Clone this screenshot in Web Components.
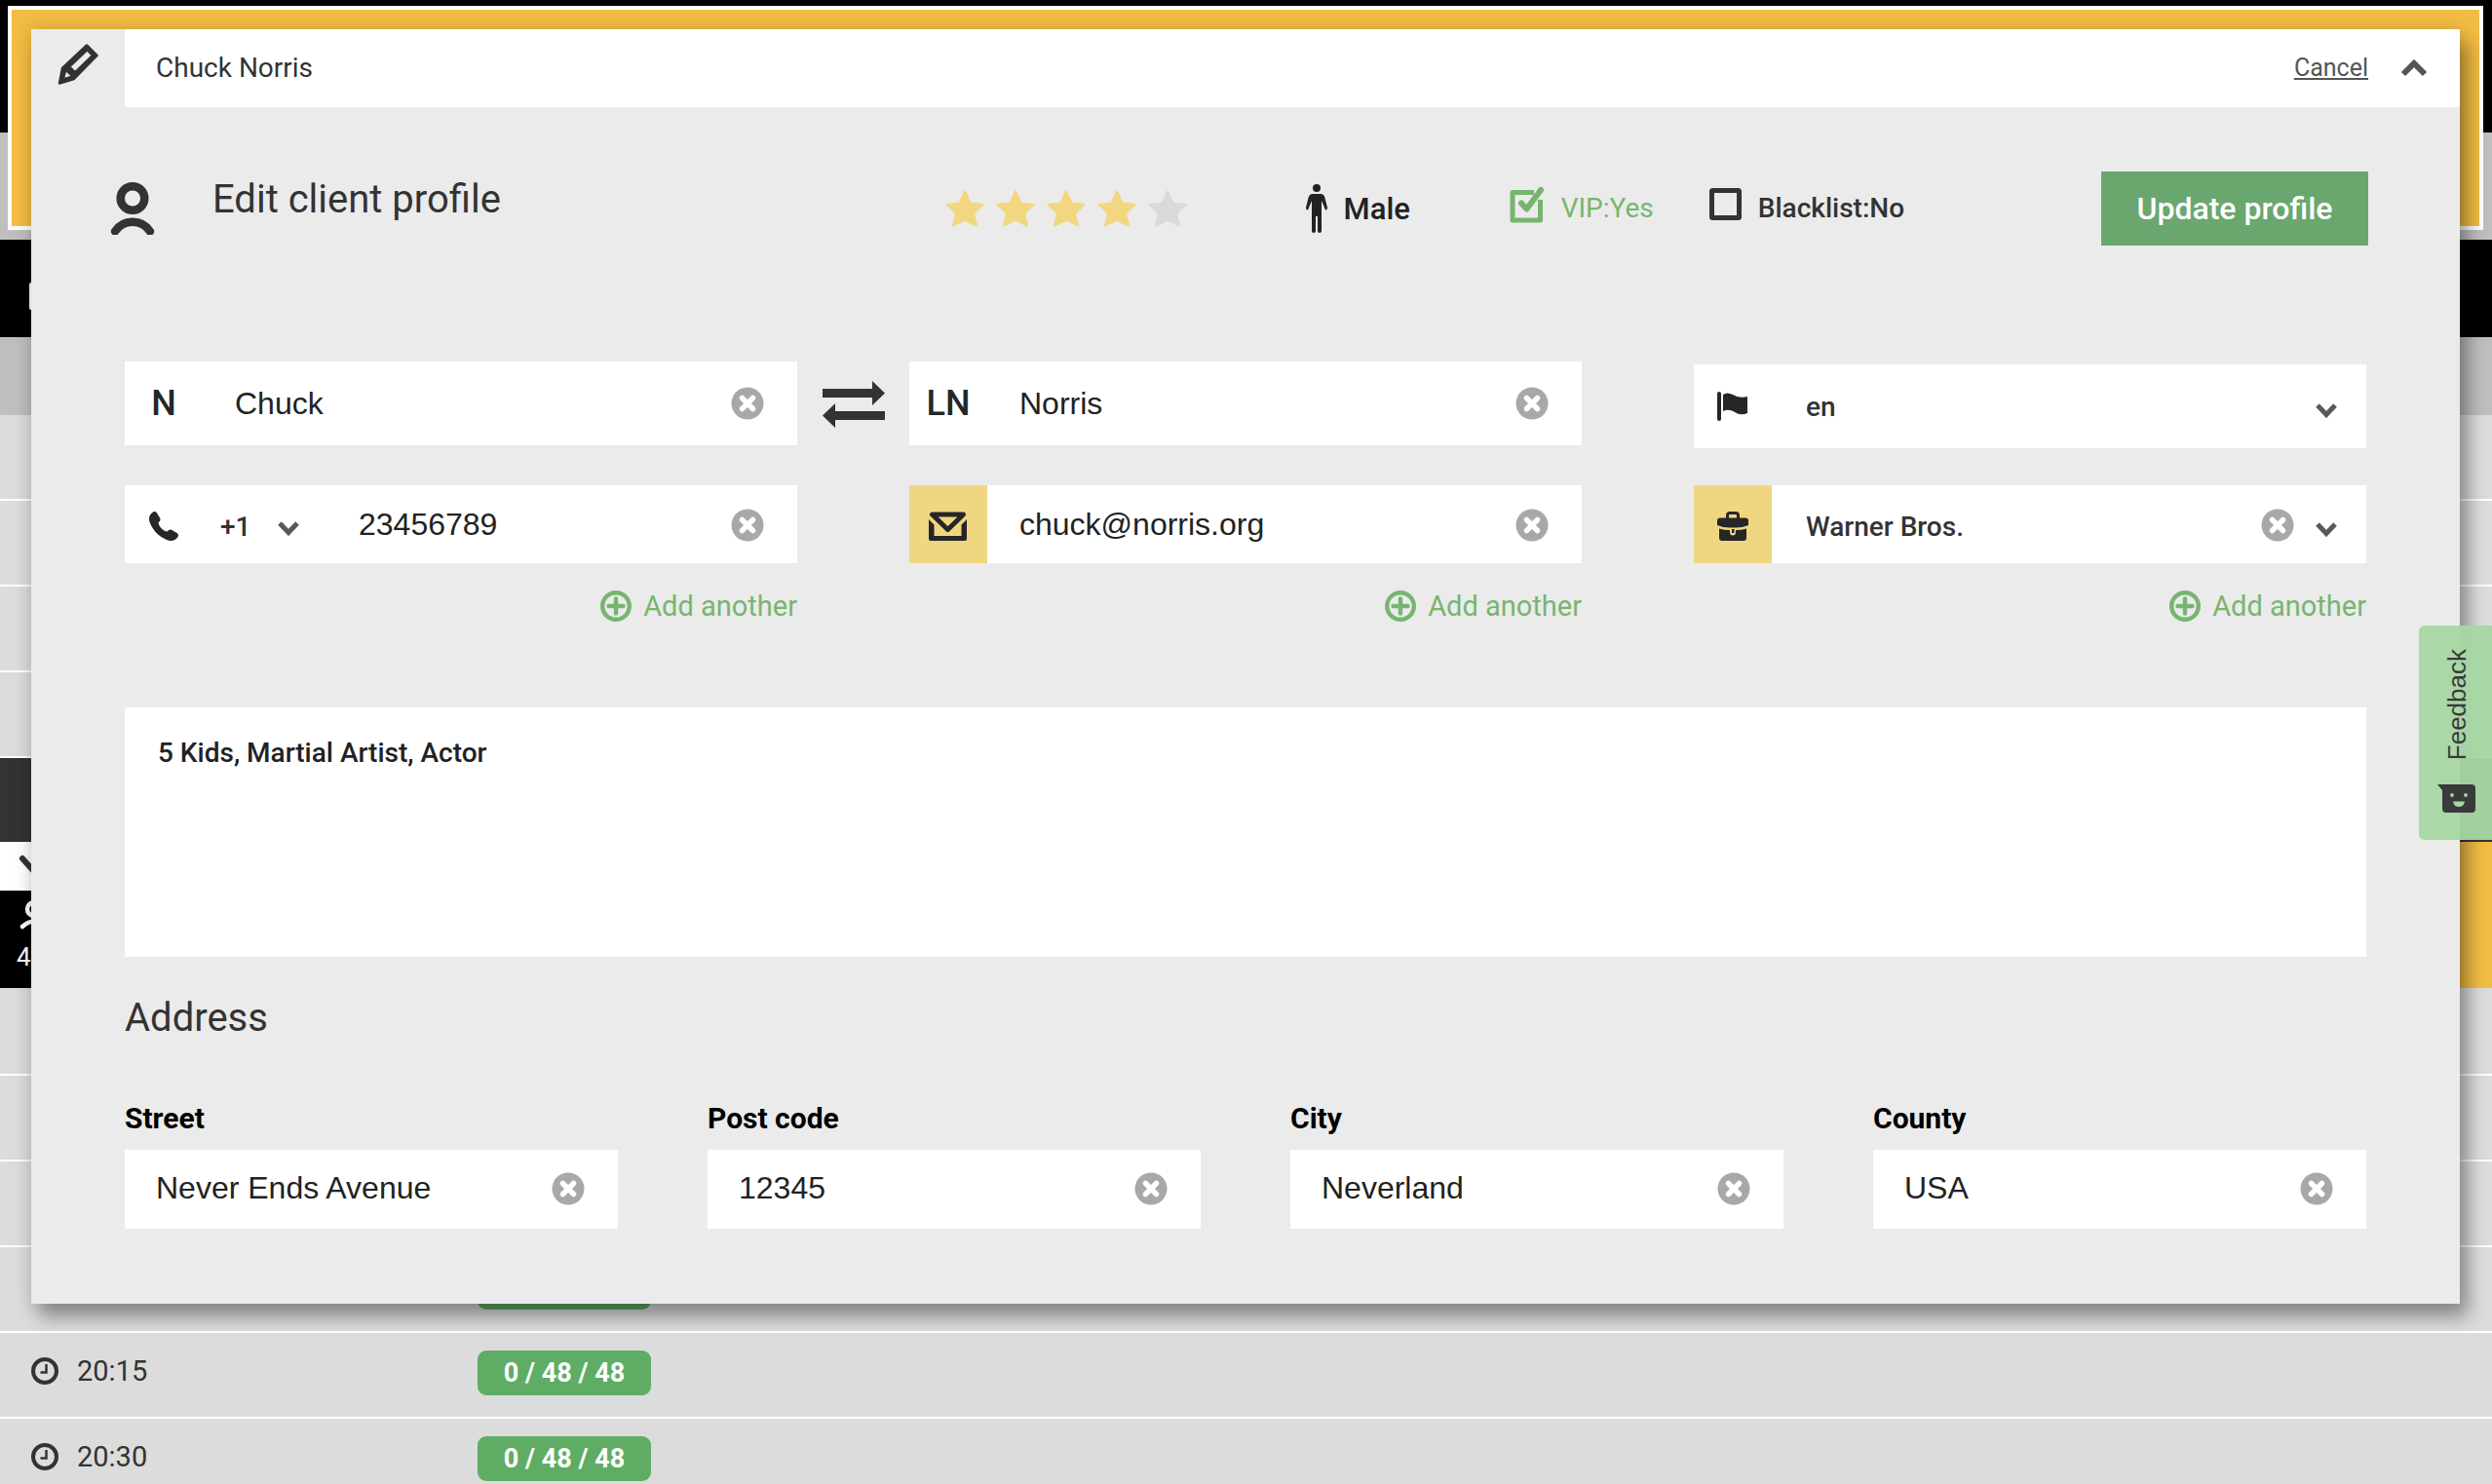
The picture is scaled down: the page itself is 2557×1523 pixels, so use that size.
<!DOCTYPE html>
<html lang="en">
<head>
<meta charset="utf-8">
<title>Edit client profile</title>
<style>
  html, body { margin: 0; }
  body { font-family: Roboto, "Liberation Sans", sans-serif; font-size: 28px; font-weight: 500; color: #333; background: #dcdcdc; height: 100vh; overflow: hidden; position: relative; }
</style>
</head>
<body>
<schedule-page></schedule-page>
<profile-dialog name="Chuck Norris"></profile-dialog>
<feedback-tab></feedback-tab>
<script>
const svg = (w, h, body, extra = '') => `<svg width="${w}" height="${h}" viewBox="0 0 ${w} ${h}" fill="currentColor" aria-hidden="true" ${extra}>${body}</svg>`;
const ICONS = {
  pencil: svg(42, 42, '<path fill-rule="evenodd" stroke="currentColor" stroke-width="2.500" stroke-linejoin="round" d="M30 1.500 40.500 12 17 36 2 40.500 5 25ZM30.500 6 12 23.500 18 29.500 36 12ZM8.500 26.500 5.500 36.500 16 33.500Z"/>'),
  user: svg(46, 54, '<g fill="none" stroke="currentColor" stroke-width="8.500"><circle cx="23" cy="16.500" r="12.300"/><path stroke-linecap="round" d="M5 50.500A21.500 21.500 0 0 1 41 50.500"/></g>'),
  userSmall: svg(30, 30, '<g fill="none" stroke="currentColor" stroke-width="4.500"><circle cx="15" cy="9" r="7"/><path stroke-linecap="round" d="M3 27Q15 16 27 27"/></g>'),
  star: svg(40, 38, '<path stroke="currentColor" stroke-width="2" stroke-linejoin="round" d="M20 1.500 25.500 13.500 38.500 15 29 24 32 36.500 20 30.500 8 36.500 11 24 1.500 15 14.500 13.500Z"/>'),
  male: svg(22, 50, '<circle cx="11" cy="4" r="4"/><path d="M7 10H15Q18.500 10 19.500 14L22 24Q22 27 20 26.500L16 17V48Q16 50 14 50 12 50 12 48V33H10V48Q10 50 8 50 6 50 6 48V17L2 26.500Q0 27 0 24L2.500 14Q3.500 10 7 10Z"/>'),
  checked: svg(36, 38, '<path fill="none" stroke="currentColor" stroke-width="5" stroke-linejoin="round" d="M25 6.500H3V35H31.500V14"/><path fill="none" stroke="currentColor" stroke-width="6" stroke-linecap="round" stroke-linejoin="round" d="M12 17.500 17.500 23.500 32 4"/>'),
  unchecked: svg(33, 33, '<rect x="2.500" y="2.500" width="28" height="28" rx="1" fill="none" stroke="currentColor" stroke-width="5"/>'),
  swap: svg(64, 48, '<path d="M0 8H51V0L64 12.500 51 25V17H0ZM64 31H13V23L0 35.500 13 48V40H64Z"/>'),
  clear: svg(34, 34, '<circle cx="17" cy="17" r="16.500"/><path d="M11.500 11.500 22.500 22.500M22.500 11.500 11.500 22.500" stroke="#fff" stroke-width="5.500" stroke-linecap="round"/>'),
  chevron: svg(22, 16, '<path fill="none" stroke="currentColor" stroke-width="5" d="M2 3 11 12.500 20 3"/>'),
  chevronUp: svg(28, 20, '<path fill="none" stroke="currentColor" stroke-width="6" d="M3 17 14 6 25 17"/>'),
  chevronWide: svg(40, 26, '<path fill="none" stroke="currentColor" stroke-width="6" stroke-linecap="round" d="M4 4 20 22 36 4"/>'),
  phone: svg(30, 30, '<path d="M4 0.500C5.500-.3 7 0 8 1.500L11 6.500C12 8 11.500 9.500 9.500 11.500 10 15.500 14.500 20 18.500 20.500 20.500 18.500 22 18 23.500 19L28.500 22C30 23 30.300 24.500 29.500 26 27 30 22.500 31 18 29 10 25.500 4.500 20 1 12 -1 7.500 0 3 4 .5Z"/>'),
  mail: svg(40, 30, '<path fill="none" stroke="currentColor" stroke-width="5" stroke-linejoin="round" d="M3.500 3H35.500L19.500 18.500Z"/><path d="M0 8 5.500 13.500V25H33.500V13.500L39 8V28Q39 30 37 30H2Q0 30 0 28Z"/>'),
  flag: svg(32, 30, '<rect width="4" height="30" rx="2"/><path d="M6 3Q10 0 16 3 22 7 31 5V22Q24 25 18 21 12 17 6 20Z"/>'),
  briefcase: svg(32, 30, '<path fill="none" stroke="currentColor" stroke-width="3" d="M10.500 8V4Q10.500 1.500 13 1.500H19Q21.500 1.500 21.500 4V8"/><path d="M3 6.500H29Q32 6.500 32 9.500V14Q26 16.500 19 16.500H13Q6 16.500 0 14V9.500Q0 6.500 3 6.500ZM2 17.500Q7 19 13 19V21Q13 24.500 16 24.500 19 24.500 19 21V19Q25 19 30 17.500V27Q30 30 27 30H5Q2 30 2 27Z"/><rect x="15" y="18" width="2.500" height="4"/>'),
  plus: svg(32, 32, '<circle cx="16" cy="16" r="13.800" fill="none" stroke="currentColor" stroke-width="4.400"/><path d="M16 8.500V23.500M8.500 16H23.500" stroke="currentColor" stroke-width="4.400" stroke-linecap="round"/>'),
  clock: svg(28, 28, '<circle cx="14" cy="14" r="12" fill="none" stroke="currentColor" stroke-width="4"/><path fill="none" stroke="currentColor" stroke-width="2.500" d="M15.500 7V15.500H9.500"/>'),
  smile: svg(40, 29, '<path d="M0 0H35Q39 0 39 4V25Q39 29 35 29H9Q5 29 5 25V6Z"/><g fill="#a9d6a5"><circle cx="15" cy="11" r="1.900"/><circle cx="29" cy="11" r="1.900"/><path d="M16 17.500H28Q27 23 22 23 17 23 16 17.500Z"/></g>')
};
const BASE = `
  *, *::before, *::after { box-sizing: border-box; }
  svg { display: block; flex: none; }
  button, input, select, textarea { font: inherit; color: inherit; border: 0; margin: 0; padding: 0; background: none; border-radius: 0; outline: 0; }
  button { cursor: pointer; }
`;
const define = (tag, render) => customElements.define(tag, class extends HTMLElement {
  connectedCallback() {
    if (this.shadowRoot) return;
    this.attachShadow({ mode: 'open' }).innerHTML = `<style>${BASE}</style>` + render(this);
  }
});
const attr = (el, name, fallback = '') => el.getAttribute(name) ?? fallback;

/* ---------- schedule behind the dialog ---------- */
define('time-row', el => `
  <style>
    :host { box-sizing: border-box; display: grid; grid-template-columns: 458px 1fr; align-items: center; height: 88px; padding: 0 0 4px 32px; border-bottom: 2px solid #fff; background: #dcdcdc; }
    .time { display: flex; align-items: center; gap: 19px; font-size: 29px; font-weight: 400; line-height: 36px; padding-bottom: 4px; }
    .count { justify-self: start; width: 178px; height: 46px; border-radius: 9px; background: #5fad64; color: #fff; font-size: 27px; font-weight: 700; line-height: 46px; text-align: center; }
  </style>
  <div class="time">${attr(el, 'time') ? ICONS.clock : ''}<span>${attr(el, 'time')}</span></div>
  ${el.hasAttribute('count') ? `<div class="count">${attr(el, 'count')}</div>` : ''}`);

define('schedule-page', () => `
  <style>
    :host { display: block; }
    .top { height: 246px; padding: 6px 9px 10px 8px; background: linear-gradient(#000 136px, #bfbfbf 136px); }
    .notice { height: 100%; border: 4px solid #fff; background: #f2bd44; }
    .bar { height: 100px; background: #000; display: flex; align-items: center; padding: 16px 0 0 30px; color: #fff; }
    .sub { height: 80px; background: #bfbfbf; }
    .now { height: 86px; background: #333; }
    .open { height: 150px; background: #f2bd44; }
    .cell { width: 60px; }
    .toggle { height: 50px; background: #fff; padding: 13px 0 0 19px; }
    .guests { height: 100px; background: #000; color: #fff; padding: 10px 0 0 17px; font-size: 26px; font-weight: 400; line-height: 32px; display: grid; gap: 12px; align-content: start; }
    .guests svg { margin-left: 3px; }
    .gap { height: 2px; }
  </style>
  <div class="top"><div class="notice"></div></div>
  <div class="bar">${svg(12, 28, '<rect width="12" height="28" rx="2"/>')}</div>
  <div class="sub"></div>
  <time-row></time-row><time-row></time-row><time-row></time-row><time-row></time-row>
  <div class="now"></div>
  <div class="open"><div class="cell"><div class="toggle">${ICONS.chevronWide}</div><div class="guests">${ICONS.userSmall}<span>4</span></div></div></div>
  <div class="gap"></div>
  <time-row></time-row><time-row></time-row><time-row></time-row>
  <time-row count=""></time-row>
  <time-row time="20:15" count="0 / 48 / 48"></time-row>
  <time-row time="20:30" count="0 / 48 / 48"></time-row>`);

/* ---------- form parts ---------- */
define('profile-field', el => {
  const icon = attr(el, 'icon'), kind = attr(el, 'kind', 'text'), label = attr(el, 'label'), value = attr(el, 'value');
  const lead = ICONS[icon] || icon;
  const control = kind === 'select'
    ? `<select id="c"><option>${value}</option></select>`
    : `<input id="c" type="${kind}" value="${value}">`;
  return `
  <style>
    :host { display: flex; align-items: stretch; height: 80px; background: #fff; color: #222; }
    :host([tall]) { height: 86px; }
    label { flex: none; width: 80px; display: flex; align-items: center; justify-content: center; font-size: 36px; color: #262626; padding-top: 4px; }
    :host([tall]) label { padding: 0; }
    :host([gold]) label { background: #f1d681; }
    .code { flex: none; width: 127px; padding-left: 18px; display: grid; align-items: center; }
    .code > * { grid-area: 1 / 1; }
    .code svg { margin-left: 59px; color: #595959; pointer-events: none; }
    select { appearance: none; font-size: 28px; font-weight: 500; color: #333; height: 80px; padding-top: 4px; }
    #c { flex: 1; min-width: 0; width: 0; height: auto; padding-left: 33px; }
    #c:is(select) { padding-left: 35px; }
    :host([tall]) select { padding-top: 0; }
    input { font-family: "Liberation Sans", Arial, sans-serif; font-size: 32px; font-weight: 400; }
    .end { display: flex; align-items: center; gap: 22px; padding: 2px 34px 0 0; }
    :host([tall]) .end { padding-top: 0; }
    .end.pick { padding-right: 30px; color: #595959; }
    .pick svg { pointer-events: none; }
    button { color: #a8a8a8; }
    .down { padding-top: 7px; }
  </style>
  <label for="c" title="${label}">${lead}</label>
  ${el.hasAttribute('code') ? `<div class="code"><select aria-label="Country code"><option>${attr(el, 'code')}</option></select><span class="down">${ICONS.chevron}</span></div>` : ''}
  ${control}
  <div class="end ${kind === 'select' ? 'pick' : ''}">
    ${el.hasAttribute('fixed') ? '' : `<button type="button" aria-label="Clear ${label}">${ICONS.clear}</button>`}
    ${kind === 'select' ? `<span class="down">${ICONS.chevron}</span>` : ''}
  </div>`;
});

define('address-field', el => `
  <style>
    :host { display: block; color: #222; }
    label { display: block; font-size: 30px; font-weight: 700; line-height: 32px; color: #000; margin-bottom: 16px; }
    .box { display: flex; align-items: center; height: 81px; padding: 0 34px 2px 32px; background: #fff; }
    input { flex: 1; min-width: 0; height: 100%; font-family: "Liberation Sans", Arial, sans-serif; font-size: 32px; font-weight: 400; }
    button { color: #a8a8a8; }
  </style>
  <label for="c">${attr(el, 'label')}</label>
  <div class="box"><input id="c" type="text" value="${attr(el, 'value')}"><button type="button" aria-label="Clear ${attr(el, 'label')}">${ICONS.clear}</button></div>`);

define('add-button', () => `
  <style>
    :host { display: flex; justify-content: flex-end; }
    button { display: flex; align-items: center; gap: 12px; color: #77b56f; font-size: 29px; font-weight: 400; line-height: 32px; }
  </style>
  <button type="button">${ICONS.plus}<slot></slot></button>`);

define('star-rating', el => `
  <style>
    :host { display: flex; gap: 12px; }
    button { color: #d9d9d9; }
    button.on { color: #f3d680; }
  </style>
  ${[1, 2, 3, 4, 5].map(n => `<button type="button" aria-label="${n} stars" class="${n <= +attr(el, 'value') ? 'on' : ''}">${ICONS.star}</button>`).join('')}`);

define('check-flag', el => `
  <style>
    :host { display: block; color: #333; }
    :host([checked]) { color: #77b56f; font-weight: 400; }
    label { display: flex; align-items: center; gap: 17px; font-size: 28px; line-height: 36px; white-space: nowrap; }
    .box { display: grid; margin-bottom: 9px; }
    .box > * { grid-area: 1 / 1; }
    input { appearance: none; width: 100%; height: 100%; }
    svg { pointer-events: none; }
  </style>
  <label><span class="box"><input type="checkbox" ${el.hasAttribute('checked') ? 'checked' : ''}>${el.hasAttribute('checked') ? ICONS.checked : ICONS.unchecked}</span><slot></slot></label>`);

/* ---------- dialog ---------- */
define('profile-dialog', el => `
  <style>
    :host { display: block; position: absolute; top: 30px; left: 32px; right: 33px; background: #ebebeb; box-shadow: 8px 14px 18px rgba(0,0,0,.34), 0 0 20px rgba(0,0,0,.14); }
    header { display: grid; grid-template-columns: 96px 1fr; height: 80px; }
    .edit { display: grid; place-items: center; padding-bottom: 8px; }
    .bar { background: #fff; display: flex; align-items: center; padding: 0 33px 2px 32px; }
    .name { flex: 1; font-weight: 400; font-size: 28px; }
    a { color: #555; font-size: 25px; font-weight: 400; margin-right: 33px; }
    .bar button { color: #555; }
    .head { display: grid; grid-template-columns: 105px 752fr 369fr 209fr 205fr 402fr 274px; align-items: center; height: 76px; margin: 66px 94px 0 81px; }
    h1, h2 { margin: 0; font-size: 40px; font-weight: 400; line-height: 58px; }
    h1 { align-self: start; }
    .gender { display: flex; align-items: center; gap: 17px; font-size: 31px; color: #222; }
    .save { height: 76px; background: #6aa76f; color: #fff; font-size: 32px; }
    form { display: block; margin: 119px 96px 0; padding-bottom: 77px; }
    .fields { display: grid; grid-template-columns: 30% 5% 30% 5% 30%; grid-template-rows: 89px 80px 32px; row-gap: 38px; }
    .fields > :nth-child(4) { align-self: end; }
    .swap { justify-self: center; align-self: start; height: 86px; padding-top: 2px; }
    .a { grid-column: 1; } .b { grid-column: 3; } .c { grid-column: 5; }
    add-button { margin-top: -20px; }
    textarea { display: block; width: 100%; height: 256px; margin-top: 78px; padding: 28px 34px; background: #fff; color: #222; resize: none; font-size: 28px; line-height: 38px; }
    h2 { margin-top: 34px; }
    .address { display: grid; grid-template-columns: repeat(4, 22%); justify-content: space-between; margin-top: 58px; }
  </style>
  <header>
    <div class="edit">${ICONS.pencil}</div>
    <div class="bar"><span class="name">${attr(el, 'name')}</span><a href="#">Cancel</a><button type="button" aria-label="Collapse">${ICONS.chevronUp}</button></div>
  </header>
  <div class="head">
    ${ICONS.user}
    <h1>Edit client profile</h1>
    <star-rating value="4"></star-rating>
    <div class="gender">${ICONS.male}<span>Male</span></div>
    <check-flag checked>VIP:Yes</check-flag>
    <check-flag>Blacklist:No</check-flag>
    <button class="save" type="submit" form="profile">Update profile</button>
  </div>
  <form id="profile">
    <div class="fields">
      <profile-field class="a" tall icon="N" label="Name" value="Chuck"></profile-field>
      <button class="swap" type="button" aria-label="Swap names">${ICONS.swap}</button>
      <profile-field class="b" tall icon="LN" label="Last name" value="Norris"></profile-field>
      <profile-field class="c" tall fixed icon="flag" kind="select" label="Language" value="en"></profile-field>
      <profile-field class="a" icon="phone" kind="tel" code="+1" label="Phone" value="23456789"></profile-field>
      <profile-field class="b" gold icon="mail" kind="email" label="E-mail" value="chuck@norris.org"></profile-field>
      <profile-field class="c" gold icon="briefcase" kind="select" label="Company" value="Warner Bros."></profile-field>
      <add-button class="a">Add another</add-button>
      <add-button class="b">Add another</add-button>
      <add-button class="c">Add another</add-button>
    </div>
    <textarea aria-label="Notes">5 Kids, Martial Artist, Actor</textarea>
    <h2>Address</h2>
    <div class="address">
      <address-field label="Street" value="Never Ends Avenue"></address-field>
      <address-field label="Post code" value="12345"></address-field>
      <address-field label="City" value="Neverland"></address-field>
      <address-field label="County" value="USA"></address-field>
    </div>
  </form>`);

define('feedback-tab', () => `
  <style>
    :host { display: block; position: absolute; right: 0; top: 642px; }
    button { display: flex; flex-direction: column; align-items: center; justify-content: space-between; width: 75px; height: 220px; padding: 24px 0 28px 2px; border-radius: 6px 0 0 6px; background: rgba(167, 214, 163, .96); color: #3a3a3a; }
    span { writing-mode: vertical-rl; transform: rotate(180deg); font-family: "Liberation Sans", Arial, sans-serif; font-size: 26px; font-weight: 400; line-height: 30px; }
  </style>
  <button type="button"><span>Feedback</span>${ICONS.smile}</button>`);
</script>
</body>
</html>
